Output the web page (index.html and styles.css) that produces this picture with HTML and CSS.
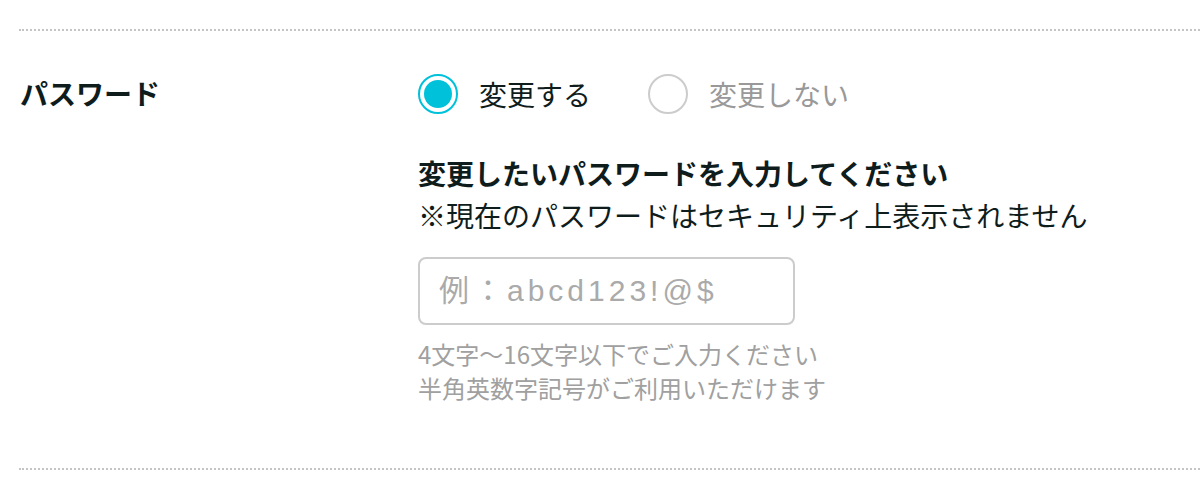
FILE: index.html
```html
<!DOCTYPE html>
<html lang="ja">
<head>
<meta charset="utf-8">
<title>パスワード</title>
<link rel="stylesheet" href="styles.css">
</head>
<body>
<section class="row">
  <div class="label">パスワード</div>
  <div class="field">
    <div class="radios">
      <label class="radio checked"><span class="dot"></span><span class="rtext">変更する</span></label>
      <label class="radio"><span class="dot"></span><span class="rtext">変更しない</span></label>
    </div>
    <div class="notes">
      <p class="heading">変更したいパスワードを入力してください</p>
      <p class="note">※現在のパスワードはセキュリティ上表示されません</p>
    </div>
    <input class="input" type="password" placeholder="例：abcd123!@$">
    <div class="hints">
      <p>4文字〜16文字以下でご入力ください</p>
      <p>半角英数字記号がご利用いただけます</p>
    </div>
  </div>
</section>
</body>
</html>
```

FILE: styles.css
```css
* { box-sizing: border-box; }
html, body { margin: 0; padding: 0; background: #fff; }
body {
  font-family: "Noto Sans CJK JP", "Noto Sans", sans-serif;
  color: #0f1c1c;
  width: 1200px;
  height: 504px;
  overflow: hidden;
}
p { margin: 0; }
.row {
  margin: 29px 0 0 19px;
  border-top: 2px dotted #c4c4c4;
  border-bottom: 2px dotted #c4c4c4;
  display: flex;
  padding: 41px 0 63px 1px;
}
.label {
  width: 398px;
  font-size: 28px;
  font-weight: bold;
  line-height: 42px;
}
.field { display: flex; flex-direction: column; align-items: flex-start; }
.radios { display: flex; align-items: center; height: 44px; gap: 57px; }
.radio { display: flex; align-items: center; gap: 21px; font-size: 28px; line-height: 42px; color: #999; }
.radio.checked { color: #0f1c1c; }
.dot {
  width: 40px; height: 40px; border-radius: 50%;
  border: 2px solid #cccccc; background: #fff; position: relative;
  flex: none;
}
.radio.checked .dot { border-color: #00c1da; }
.radio.checked .dot::after {
  content: ""; position: absolute; left: 4px; top: 4px;
  width: 28px; height: 28px; border-radius: 50%; background: #00c1da;
}
.notes { margin-top: 36px; font-size: 28px; line-height: 42px; }
.heading { font-weight: bold; }
.input {
  margin-top: 21px;
  width: 377px; height: 68px;
  border: 2px solid #cccccc; border-radius: 8px;
  padding: 0 0 0 19px;
  font-family: "Liberation Sans", "Noto Sans CJK JP", sans-serif;
  font-size: 30px; letter-spacing: 4px;
  color: #333; outline: none; background: #fff;
}
.input::placeholder { color: #aaaaaa; }
.hints { margin-top: 12px; font-size: 24px; line-height: 34px; color: #a0a0a0; }
```
